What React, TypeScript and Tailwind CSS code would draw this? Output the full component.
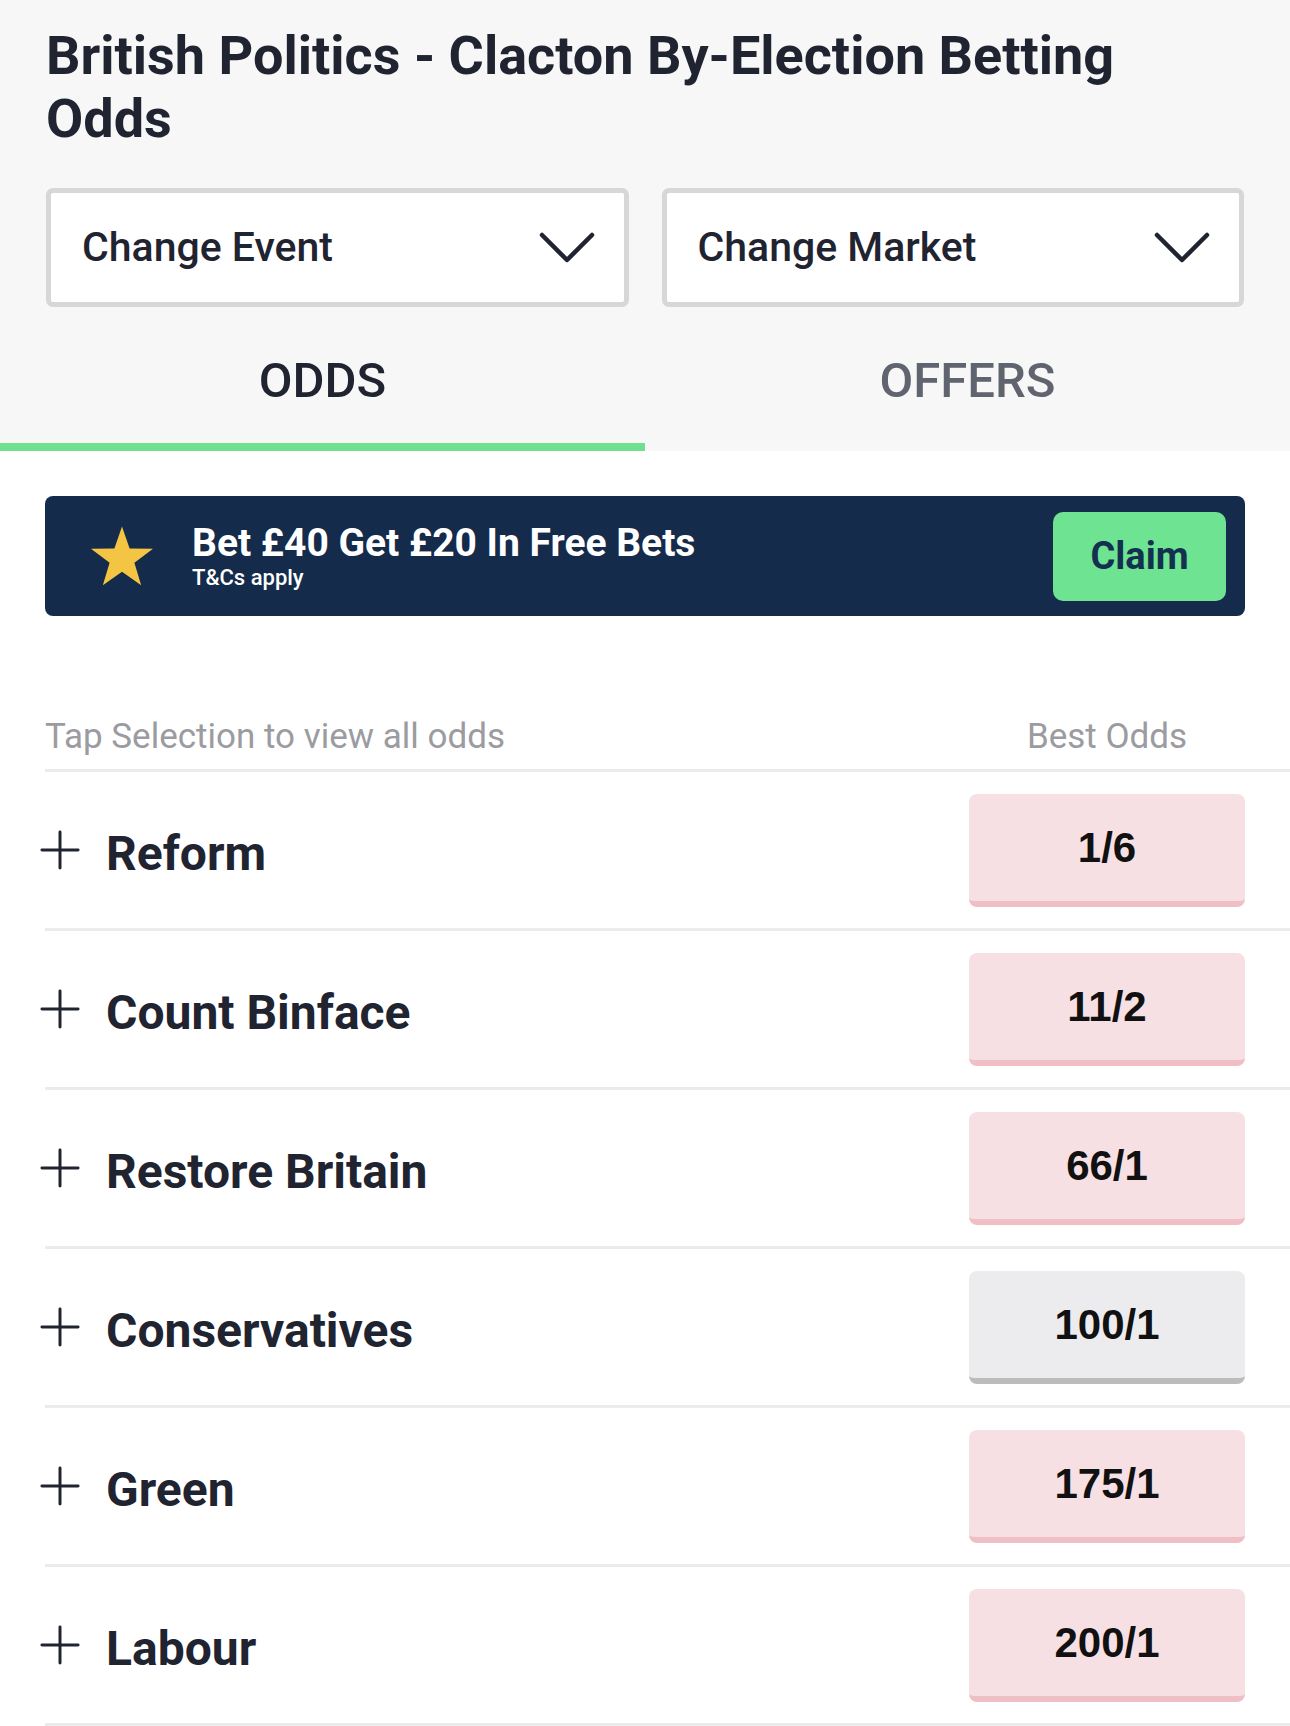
import { Plus } from 'lucide-react';

interface Selection {
  name: string;
  odds: string;
  muted?: boolean;
}

const selections: Selection[] = [
  { name: 'Reform', odds: '1/6' },
  { name: 'Count Binface', odds: '11/2' },
  { name: 'Restore Britain', odds: '66/1' },
  { name: 'Conservatives', odds: '100/1', muted: true },
  { name: 'Green', odds: '175/1' },
  { name: 'Labour', odds: '200/1' },
];

const Star = () => (
  <svg width="62" height="60" viewBox="1 0.8 22 21" aria-hidden="true">
    <path
      d="M12 0.8 L14.7 8.6 L23 8.7 L16.4 13.7 L18.8 21.7 L12 16.9 L5.2 21.7 L7.6 13.7 L1 8.7 L9.3 8.6 Z"
      fill="#f4c543"
    />
  </svg>
);

const Chevron = () => (
  <svg width="56" height="32" viewBox="0 0 56 32" fill="none" aria-hidden="true">
    <path d="M3 3 L28 28 L53 3" stroke="#1f2430" strokeWidth="4.5" strokeLinecap="round" strokeLinejoin="round" />
  </svg>
);

const Dropdown = ({ label }: { label: string }) => (
  <button className="flex-1 h-[119px] bg-white border-[5px] border-[#d7d7d7] rounded-[7px] flex items-center justify-between pl-[31px] pr-[29px]">
    <span className="text-[41px] font-medium text-[#1f2430]">{label}</span>
    <Chevron />
  </button>
);

export default function App() {
  return (
    <div className="w-full min-h-screen bg-white font-['Roboto',sans-serif]">
      <div className="bg-[#f7f7f7]">
        <div className="px-[46px] pt-[24px]">
          <h1 className="text-[54px] leading-[63px] font-bold text-[#1f2430] max-w-[1140px]">
            British Politics - Clacton By-Election Betting Odds
          </h1>
          <div className="flex gap-[33px] mt-[38px]">
            <Dropdown label="Change Event" />
            <Dropdown label="Change Market" />
          </div>
        </div>
        <div className="flex">
          <button className="flex-1 h-[144px] pt-[12px] flex items-center justify-center border-b-[8px] border-[#6fe08f] text-[49px] font-medium text-[#1f2430]">
            ODDS
          </button>
          <button className="flex-1 h-[144px] pt-[12px] flex items-center justify-center border-b-[8px] border-transparent text-[49px] font-medium text-[#60646e]">
            OFFERS
          </button>
        </div>
      </div>

      <div className="px-[45px] pt-[45px]">
        <div className="h-[120px] rounded-[8px] bg-[#152b4b] flex items-center pl-[46px] pr-[19px]">
          <Star />
          <div className="ml-[39px] flex-1">
            <div className="text-[39px] leading-[44px] font-bold text-white">Bet £40 Get £20 In Free Bets</div>
            <div className="text-[22px] leading-[26px] font-medium text-white">T&amp;Cs apply</div>
          </div>
          <button className="w-[173px] h-[89px] rounded-[10px] bg-[#6ee391] text-[38px] font-bold text-[#143050]">
            Claim
          </button>
        </div>
      </div>

      <div className="ml-[45px] mt-[100px]">
        <div className="flex items-center justify-between pr-[45px] pb-[11px] border-b-[3px] border-[#ebebeb]">
          <span className="text-[35px] leading-[42px] text-[#9b9ba1]">Tap Selection to view all odds</span>
          <span className="w-[276px] text-center text-[35px] leading-[42px] text-[#9b9ba1]">Best Odds</span>
        </div>
        {selections.map((s) => (
          <div
            key={s.name}
            className="h-[159px] flex items-center justify-between pr-[45px] border-b-[3px] border-[#ebebeb]"
          >
            <div className="flex items-center">
              <Plus className="w-[62px] h-[62px] -ml-[16px] text-[#1f2430]" strokeWidth={1.15} />
              <span className="ml-[15px] pt-[8px] text-[48px] font-bold text-[#1f2430]">{s.name}</span>
            </div>
            <button
              className={`w-[276px] h-[113px] rounded-[8px] border-b-[6px] flex items-center justify-center font-['Liberation_Sans',Arial,sans-serif] font-bold text-[42px] text-[#111111] ${
                s.muted ? 'bg-[#ececee] border-[#bcbcbc]' : 'bg-[#f7e0e4] border-[#f0bec5]'
              }`}
            >
              {s.odds}
            </button>
          </div>
        ))}
      </div>
    </div>
  );
}
